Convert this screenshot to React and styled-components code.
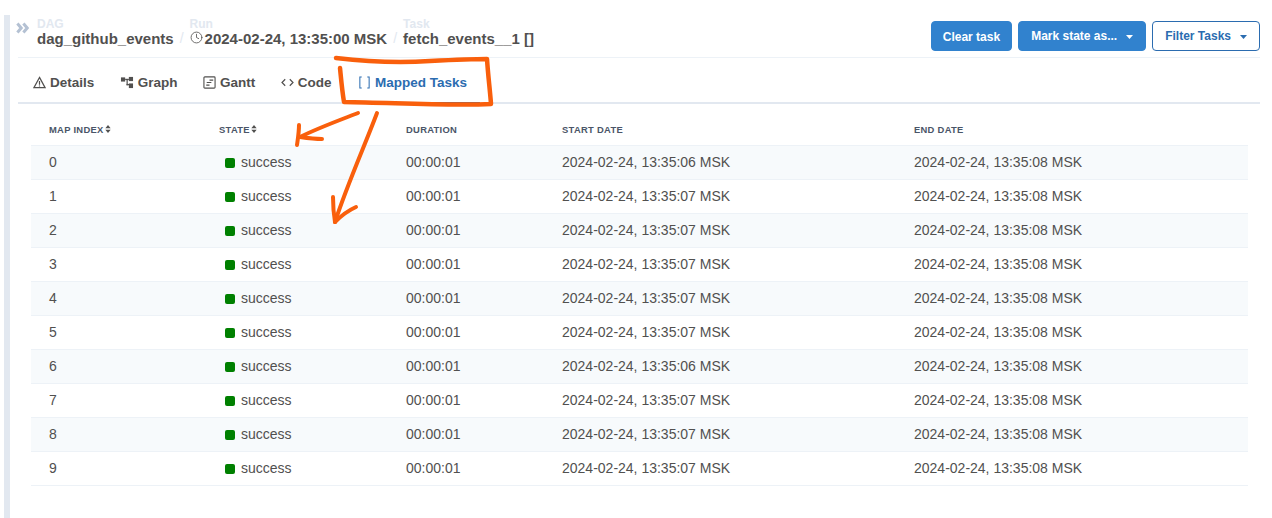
import React from 'react'
import styled, { createGlobalStyle } from 'styled-components'
import { LuClock } from 'react-icons/lu'

const GlobalStyle = createGlobalStyle`
html, body {
  margin: 0;
  padding: 0;
  height: 100%;
  background: #fff;
}
body {
  font-family: "Liberation Sans", Arial, sans-serif;
  color: #51504f;
  overflow: hidden;
}
`

const rows = [
  ['0', '2024-02-24, 13:35:06 MSK'],
  ['1', '2024-02-24, 13:35:07 MSK'],
  ['2', '2024-02-24, 13:35:07 MSK'],
  ['3', '2024-02-24, 13:35:07 MSK'],
  ['4', '2024-02-24, 13:35:07 MSK'],
  ['5', '2024-02-24, 13:35:07 MSK'],
  ['6', '2024-02-24, 13:35:06 MSK'],
  ['7', '2024-02-24, 13:35:07 MSK'],
  ['8', '2024-02-24, 13:35:07 MSK'],
  ['9', '2024-02-24, 13:35:07 MSK'],
]

function SortIcon() {
  return (
    <SortSvg viewBox="0 0 6 9" width="6" height="8">
      <path d="M3 0 L6 3.6 H0 Z M3 9 L0 5.4 H6 Z" fill="#51504f" />
    </SortSvg>
  )
}

function Caret() {
  return (
    <CaretSvg viewBox="0 0 7 4" width="7" height="4">
      <path d="M0 0 H7 L3.5 4 Z" fill="currentColor" />
    </CaretSvg>
  )
}

function Annotation() {
  return (
    <Overlay viewBox="0 0 1272 518" fill="none" stroke="#f95f0c" strokeWidth="4" strokeLinecap="round" strokeLinejoin="round">
      <path strokeWidth="4.5" d="M336 58 C370 62 400 63 430 61 C450 60 470 59 487 59 C488 75 490 90 491 104 C450 106 400 103 344 102 C342 90 341 78 340 68" />
      <path d="M358 113 C340 120 318 128 300 137" />
      <path d="M299 125 C299 132 298 138 297 145" />
      <path d="M300 137 C307 138 314 139 322 139" />
      <path d="M377 113 C365 145 347 185 335 222" />
      <path d="M335 222 C334 216 333 208 333 197" />
      <path d="M335 222 C341 216 347 211 356 207" />
    </Overlay>
  )
}

export default function App() {
  return (
    <>
      <GlobalStyle />
      <Page>
        <SideBar />
        <Main>
          <Header>
            <Collapse viewBox="0 0 13 12" width="13" height="12" fill="none" stroke="#b4c1d3" strokeWidth="3">
              <path d="M1.4 1.5 L5.2 6 L1.4 10.5 M7.4 1.5 L11.2 6 L7.4 10.5" />
            </Collapse>
            <Crumbs>
              <Crumb>
                <CrumbLabel>DAG</CrumbLabel>
                <CrumbValue>dag_github_events</CrumbValue>
              </Crumb>
              <Slash>/</Slash>
              <Crumb>
                <CrumbLabel>Run</CrumbLabel>
                <CrumbValue>
                  <ClockIcon />
                  2024-02-24, 13:35:00 MSK
                </CrumbValue>
              </Crumb>
              <Slash>/</Slash>
              <Crumb>
                <CrumbLabel>Task</CrumbLabel>
                <CrumbValue>fetch_events__1 []</CrumbValue>
              </Crumb>
            </Crumbs>
            <Actions>
              <Button>Clear task</Button>
              <Button $menu>Mark state as... <Caret /></Button>
              <Button $menu $outline>Filter Tasks <Caret /></Button>
            </Actions>
          </Header>
          <Tabs>
            <Tab>
              <svg viewBox="0 0 14 14" width="13" height="13" fill="none" stroke="#51504f" strokeWidth="1.3">
                <path d="M7 1.5 L13 12.5 H1 Z" />
                <path d="M7 5.5 V9.5 M7 10.3 V11.4" />
              </svg>
              Details
            </Tab>
            <Tab>
              <svg viewBox="0 0 14 14" width="14" height="13" fill="#51504f">
                <rect x="0.5" y="1.5" width="4.5" height="4.5" />
                <rect x="5" y="3" width="4" height="1.4" />
                <rect x="9" y="1" width="4.5" height="4.5" />
                <rect x="9" y="8" width="4.5" height="5" />
                <rect x="6.5" y="4" width="1.3" height="6" />
                <rect x="6.5" y="8.6" width="3" height="1.4" />
              </svg>
              Graph
            </Tab>
            <Tab>
              <svg viewBox="0 0 14 14" width="13" height="13" fill="none" stroke="#51504f" strokeWidth="1.2">
                <rect x="1" y="1" width="12" height="12" rx="1" />
                <path d="M7 4.5 H11 M4 7 H9 M3.5 9.8 H7" />
              </svg>
              Gantt
            </Tab>
            <Tab>
              <svg viewBox="0 0 14 12" width="13" height="11" fill="none" stroke="#51504f" strokeWidth="1.3">
                <path d="M4.5 2.5 L1 6 L4.5 9.5 M9.5 2.5 L13 6 L9.5 9.5" />
              </svg>
              Code
            </Tab>
            <Tab $active>
              <svg viewBox="0 0 12 14" width="13" height="13" fill="none" stroke="#2b6cb0" strokeWidth="1.1">
                <path d="M3 1 H1 V13 H3 M9 1 H11 V13 H9" />
              </svg>
              Mapped Tasks
            </Tab>
          </Tabs>
          <Table>
            <thead>
              <tr>
                <Th $w={170}>Map Index<SortIcon /></Th>
                <Th $w={187}>State<SortIcon /></Th>
                <Th $w={156}>Duration</Th>
                <Th $w={352}>Start Date</Th>
                <Th $w={352}>End Date</Th>
              </tr>
            </thead>
            <tbody>
              {rows.map(([index, start]) => (
                <Row key={index}>
                  <Td>{index}</Td>
                  <Td>
                    <StateCell>
                      <StateDot />
                      success
                    </StateCell>
                  </Td>
                  <Td>00:00:01</Td>
                  <Td>{start}</Td>
                  <Td>2024-02-24, 13:35:08 MSK</Td>
                </Row>
              ))}
            </tbody>
          </Table>
        </Main>
        <Annotation />
      </Page>
    </>
  )
}

const Page = styled.div`
height: 518px;
display: flex;
padding: 15px 12px 0 4px;
box-sizing: border-box;
position: relative;
overflow: hidden;
`
const SideBar = styled.div`
width: 6px;
background: #e2e8f0;
margin-right: 8px;
flex-shrink: 0;
`
const Main = styled.div`
flex: 1;
min-width: 0;
`
const Header = styled.div`
height: 42px;
display: flex;
align-items: flex-start;
border-bottom: 1px solid #edf2f7;
`
const Collapse = styled.svg`
margin-top: 7px;
margin-left: -2px;
margin-right: 8px;
flex-shrink: 0;
`
const Crumbs = styled.div`
display: flex;
align-items: flex-end;
gap: 6px;
padding-top: 3px;
`
const Crumb = styled.div`
display: flex;
flex-direction: column;
`
const CrumbLabel = styled.span`
font-size: 12px;
line-height: 13px;
font-weight: 700;
color: #e2e8f0;
`
const CrumbValue = styled.span`
font-size: 15px;
line-height: 13px;
font-weight: 700;
color: #51504f;
display: flex;
align-items: center;
height: 15px;
`
const ClockIcon = styled(LuClock)`
width: 13px;
height: 13px;
stroke-width: 1.5;
margin-right: 2px;
margin-top: -3px;
`
const Slash = styled.span`
font-size: 14px;
line-height: 15px;
color: #e2e8f0;
`
const Actions = styled.div`
margin-left: auto;
display: flex;
gap: 6px;
padding-top: 6px;
`
const Button = styled.button`
height: 30px;
padding: ${(p) => (p.$menu ? '0 12px' : '2px 11px 0')};
display: flex;
align-items: center;
gap: 9px;
border-radius: 4px;
box-sizing: border-box;
font-family: inherit;
font-size: 12px;
font-weight: 700;
border: 1px solid ${(p) => (p.$outline ? '#2b6cb0' : '#3182ce')};
background: ${(p) => (p.$outline ? '#fff' : '#3182ce')};
color: ${(p) => (p.$outline ? '#2b6cb0' : '#fff')};
`
const CaretSvg = styled.svg`
margin-top: 2px;
`
const Tabs = styled.div`
height: 44px;
display: flex;
padding-left: 2px;
border-bottom: 2px solid #e2e8f0;
`
const Tab = styled.div`
display: flex;
align-items: center;
gap: 4px;
height: 46px;
padding: 4px 12.5px 0 ${(p) => (p.$active ? '14px' : '13px')};
box-sizing: border-box;
font-size: 13.5px;
font-weight: 700;
color: ${(p) => (p.$active ? '#2b6cb0' : '#51504f')};
border-bottom: 2px solid ${(p) => (p.$active ? '#2b6cb0' : 'transparent')};
`
const Table = styled.table`
margin: 10px 0 0 13px;
width: 1217px;
table-layout: fixed;
border-collapse: collapse;
`
const Th = styled.th`
width: ${(p) => p.$w}px;
height: 31px;
padding: 1px 0 0 18px;
box-sizing: border-box;
text-align: left;
font-size: 9.4px;
font-weight: 700;
letter-spacing: 0.3px;
text-transform: uppercase;
color: #4a5568;
border-bottom: 1px solid #edf2f7;
`
const SortSvg = styled.svg`
margin-left: 1px;
vertical-align: 0;
`
const Row = styled.tr`
height: 34px;
&:nth-child(odd) {
  background: #f7fafc;
}
`
const Td = styled.td`
padding: 0 0 0 18px;
font-size: 14px;
color: #51504f;
border-bottom: 1px solid #edf2f7;
`
const StateCell = styled.div`
display: flex;
align-items: center;
gap: 6px;
padding-left: 6px;
`
const StateDot = styled.span`
width: 10px;
height: 10px;
border-radius: 2px;
background: green;
margin-top: 2px;
`
const Overlay = styled.svg`
position: absolute;
top: 0;
left: 0;
width: 1272px;
height: 518px;
pointer-events: none;
`
